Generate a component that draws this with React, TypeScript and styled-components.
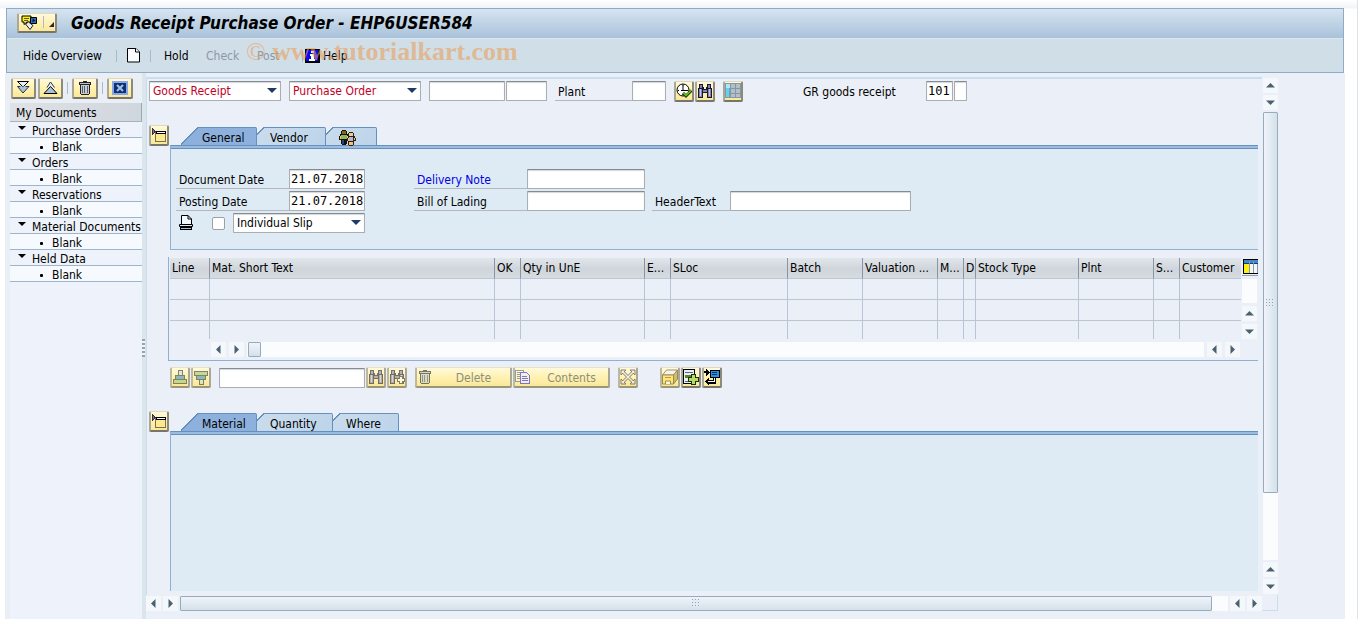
import React from 'react';
import styled, { createGlobalStyle, css } from 'styled-components';

const SANS = `'DejaVu Sans Condensed', 'DejaVu Sans', Tahoma, sans-serif`;
const MONO = `'DejaVu Sans Mono', 'Liberation Mono', monospace`;
const EDGE = '#6690bd';

const GlobalStyle = createGlobalStyle`
  * { box-sizing: border-box; }
  body { margin: 0; background: #fff; color: #000; font: 12px/16px ${SANS}; font-stretch: condensed; }
  button, input, select { font: inherit; color: inherit; margin: 0; }
  button { cursor: pointer; }
  svg { display: block; flex: none; }
`;

/* ---------- frame ---------- */

const Page = styled.div`
  position: relative;
  display: flex;
  flex-direction: column;
  min-height: 100vh;
  padding: 0 12px 0 5px;
  border-right: 1px solid #dbe2ea;
  background: linear-gradient(#fff, #f1f4f8 8px, #fff 9px);
`;

const Header = styled.header`
  margin: 8px 1px 0;
  border: 1px solid #8fabc6;
  background: #d0dee8;
`;

const TitleBar = styled.div`
  display: flex;
  align-items: center;
  gap: 14px;
  height: 30px;
  padding: 0 10px 2px;
  border-bottom: 1px solid #dce8f1;
  background: linear-gradient(#d6e4f0, #bfd3e5 50%, #a9c2da);
`;

const Title = styled.h1`
  margin: 0;
  font: italic bold 17px/20px ${SANS};
  white-space: nowrap;
`;

const Toolbar = styled.div`
  display: flex;
  align-items: center;
  height: 33px;
  padding: 0 8px;
`;

const ToolLink = styled.button<{ $width: number; $tight?: boolean; $center?: boolean }>`
  display: flex;
  align-items: center;
  justify-content: ${(p) => (p.$center ? 'center' : 'flex-start')};
  gap: 3px;
  width: ${(p) => p.$width}px;
  height: 24px;
  padding: 0 ${(p) => (p.$tight ? 2 : 8)}px;
  border: 0;
  background: none;
  white-space: nowrap;
  &:disabled { color: #8c98a4; cursor: default; }
`;

const Divider = styled.span<{ $gap: number }>`
  flex: none;
  width: 1px;
  height: 12px;
  margin: 0 ${(p) => p.$gap}px;
  background: #a7bace;
`;

const Watermark = styled.div`
  position: absolute;
  left: 246px;
  top: 38px;
  color: rgba(232, 160, 92, 0.62);
  font: bold 26px/28px 'Liberation Serif', serif;
  white-space: nowrap;
  pointer-events: none;
  span { font-weight: normal; }
`;

const Body = styled.div`
  flex: 1;
  display: flex;
  background: #ebeff7;
`;

/* ---------- shared controls ---------- */

const IconButton = styled.button<{ $width?: number; $height?: number }>`
  position: relative;
  flex: none;
  display: flex;
  align-items: center;
  justify-content: center;
  width: ${(p) => p.$width ?? 20}px;
  height: ${(p) => p.$height ?? 21}px;
  padding: 0;
  border: 1px solid #9a978a;
  border-width: 1px 2px 2px;
  border-color: #ded9bb #8d8a7c #77746a #aaa794;
  border-radius: 2px;
  background: linear-gradient(#fff9dc, #fff1ae 55%, #f9e79b);
  &:disabled { border-color: #e6e2c8 #aaa794 #9b9675 #bcb99f; color: #8e8e80; cursor: default; }
  &:disabled svg { opacity: 0.6; }
`;

const WideButton = styled(IconButton)`
  width: 97px;
  justify-content: flex-start;
  padding-left: 0;
  span { flex: 1; padding: 1px 0 0 4px; text-align: center; }
`;

const fieldLook = css`
  height: 20px;
  border: 1px solid #a9aeb4;
  border-top-color: #858b92;
  border-radius: 1px;
  background: #fff;
  box-shadow: inset 0 1px 1px #d4d7da;
`;

const Field = styled.input<{ $width: number }>`
  ${fieldLook}
  flex: none;
  width: ${(p) => p.$width}px;
  padding: 0 0 0 1px;
  font-family: ${MONO};
`;

const SelectBox = styled.span`
  position: relative;
  flex: none;
  display: block;
  width: 132px;
  &::after {
    content: '';
    position: absolute;
    right: 4px;
    top: 7px;
    border: 5px solid transparent;
    border-top-color: #1f3a66;
    border-bottom: 0;
    pointer-events: none;
  }
`;

const Select = styled.select<{ $red?: boolean }>`
  ${fieldLook}
  display: block;
  width: 100%;
  padding: 0 3px;
  appearance: none;
  color: ${(p) => (p.$red ? '#c1001f' : '#000')};
`;

const Label = styled.label<{ $width: number; $plain?: boolean; $link?: boolean }>`
  flex: none;
  width: ${(p) => p.$width}px;
  height: 20px;
  padding: 3px 0 0 3px;
  border-bottom: 1px solid ${(p) => (p.$plain ? 'transparent' : '#b4b8bd')};
  color: ${(p) => (p.$link ? '#0000e6' : 'inherit')};
  white-space: nowrap;
`;

const Group = styled.div<{ $gap?: number }>`
  display: flex;
  align-items: center;
  gap: ${(p) => p.$gap ?? 1}px;
`;

function Choice({ label, options, red }: { label: string; options: string[]; red?: boolean }) {
  return (
    <SelectBox>
      <Select aria-label={label} $red={red} defaultValue={options[0]}>
        {options.map((o) => <option key={o}>{o}</option>)}
      </Select>
    </SelectBox>
  );
}

/* ---------- sidebar ---------- */

const Sidebar = styled.aside`
  flex: none;
  width: 137px;
  padding-left: 5px;
  background: #e9eff4;
`;

const SideTools = styled.div`
  display: flex;
  align-items: center;
  height: 30px;
  padding: 0 0 0 1px;
  gap: 2px;
`;

const SidePanel = styled.nav`
  min-height: calc(100% - 30px);
  background: #eef3fb;
`;

const SideTitle = styled.h2`
  height: 19px;
  margin: 0;
  padding: 2px 6px 0;
  border-right: 1px solid #9aa8b5;
  border-bottom: 1px solid #a9b2bb;
  background: linear-gradient(90deg, #dfe2e6, #cfd6dd);
  font: 12px/16px ${SANS};
`;

const Tree = styled.ul`
  margin: 0;
  padding: 0;
  list-style: none;
`;

const TreeButton = styled.button<{ $leaf?: boolean }>`
  display: flex;
  align-items: center;
  gap: 7px;
  width: 100%;
  height: 16px;
  padding: 3px 0 0 ${(p) => (p.$leaf ? 30 : 8)}px;
  border: 0;
  border-bottom: 1px solid #9db5cb;
  background: ${(p) => (p.$leaf ? '#f6faff' : 'none')};
  line-height: 14px;
  white-space: nowrap;
  &::before {
    content: '';
    ${(p) => p.$leaf
      ? css`width: 3px; height: 3px; margin-right: 2px; border-radius: 1px; background: #000;`
      : css`margin-bottom: 6px; border: 4px solid transparent; border-top-color: #000; border-bottom: 0; margin-right: -1px;`}
  }
`;

const Splitter = styled.div`
  flex: none;
  display: flex;
  align-items: center;
  width: 4px;
  padding-top: 4px;
  background: #dae5ec;
`;

const SplitGrip = styled.span`
  width: 3px;
  height: 18px;
  background: repeating-linear-gradient(#97a4b0 0 2px, #eef4f8 2px 4px);
`;

/* ---------- workspace ---------- */

const Workspace = styled.main`
  flex: 1;
  min-width: 0;
  display: grid;
  grid-template-columns: minmax(0, 1fr) 16px;
  grid-template-rows: 1fr 16px;
  margin: 4px 67px 8px 0;
`;

const Content = styled.div`
  display: flex;
  flex-direction: column;
  border-left: 1px solid #c9dcea;
  border-top: 2px solid #cbdeee;
  padding: 2px 4px 4px 2px;
`;

const KeyRow = styled.div`
  display: flex;
  gap: 8px;
  height: 20px;
  margin-bottom: 24px;
`;

const Section = styled.section<{ $grow?: boolean }>`
  display: grid;
  grid-template-columns: 21px minmax(0, 1fr);
  grid-template-rows: 20px 1fr;
  ${(p) => p.$grow && css`flex: 1;`}
`;

const TabStrip = styled.div`
  display: flex;
  align-items: flex-end;
  padding-left: 11px;
`;

const Tab = styled.button<{ $active?: boolean; $width: number; $z: number }>`
  position: relative;
  z-index: ${(p) => p.$z};
  display: flex;
  align-items: center;
  width: ${(p) => p.$width}px;
  height: 18px;
  margin-right: -10px;
  padding: ${(p) => (p.$active ? '4px 0 0 21px' : '4px 0 0 23px')};
  border: 0;
  border-right: 1px solid ${EDGE};
  border-radius: 0 2px 0 0;
  background:
    linear-gradient(${EDGE}, ${EDGE}) 18px 0 / 100% 1px no-repeat,
    linear-gradient(135deg, transparent 12px, ${EDGE} 12px, ${EDGE} 13px, ${(p) => (p.$active ? '#8db1dc 13px' : '#c9dced 13px, #bdd3e9')});
`;

const Panel = styled.div<{ $short?: boolean }>`
  grid-column: 2;
  position: relative;
  border-top: 1px solid ${EDGE};
  border-left: 1px solid #8fb0d2;
  border-bottom: ${(p) => (p.$short ? '1px solid #8fb0cf' : '0')};
  background: linear-gradient(#9bbbe0 2px, ${EDGE} 2px, ${EDGE} 3px, #deebf5 3px);
  min-height: ${(p) => (p.$short ? 105 : 120)}px;
  padding: 23px 0 14px 5px;
`;

const FormRow = styled.div`
  display: flex;
  align-items: center;
  height: 20px;
  margin-bottom: 2px;
`;

const Spacer = styled.span<{ $width: number }>`
  flex: none;
  width: ${(p) => p.$width}px;
`;

const Check = styled.input`
  flex: none;
  appearance: none;
  width: 13px;
  height: 13px;
  margin: 0 8px 0 18px;
  border: 1px solid #9ba1a8;
  border-radius: 2px;
  background: #fff;
`;

/* ---------- item grid ---------- */

const GridFrame = styled.div`
  margin: 7px 0 6px 19px;
  border-left: 1px solid #8fb0cf;
  border-bottom: 1px solid #8fb0cf;
`;

const GridTop = styled.div`
  display: flex;
  padding: 1px 0 0 1px;
`;

const Items = styled.table`
  flex: 1;
  width: 0;
  height: 81px;
  table-layout: fixed;
  border-collapse: separate;
  border-spacing: 0;
  th, td { padding: 0 2px; border-left: 1px solid #b9c5d4; border-bottom: 1px solid #bcc7d5; }
  th:first-child, td:first-child { border-left: 0; }
  th {
    height: 21px;
    border-left-color: #8795a5;
    background: linear-gradient(#e2e6ea, #cfd5db 55%, #d7dce1);
    font-weight: normal;
    text-align: left;
    white-space: nowrap;
    overflow: hidden;
    text-overflow: ellipsis;
  }
  td { height: 21px; }
  tr:last-child td { height: 18px; border-bottom: 0; }
`;

const GridSide = styled.div`
  flex: none;
  display: flex;
  flex-direction: column;
  gap: 3px;
  width: 17px;
  padding-left: 1px;
`;

const ConfigButton = styled.button`
  height: 18px;
  padding: 0 0 1px 1px;
  border: 0;
  border-bottom: 1px solid #8ea3ba;
  background: none;
  overflow: hidden;
`;

const GridScroll = styled.div`
  display: flex;
  align-items: center;
  gap: 3px;
  padding: 3px 18px 3px 42px;
`;

const Track = styled.span<{ $vertical?: boolean }>`
  flex: 1;
  display: flex;
  flex-direction: ${(p) => (p.$vertical ? 'column' : 'row')};
  ${(p) => (p.$vertical ? 'width: 15px;' : 'height: 15px;')}
  background: #fafcfe;
`;

const Thumb = styled.span<{ $vertical?: boolean; $grow: number }>`
  display: flex;
  align-items: center;
  justify-content: center;
  ${(p) => (p.$grow ? `flex: ${p.$grow} 0 0;` : 'flex: 0 0 13px; margin-left: 1px;')}
  border: 1px solid #98abba;
  border-radius: 1px;
  background: linear-gradient(${(p) => (p.$vertical ? '90deg' : '180deg')}, #f0f4f9, #e4ebf4 45%, #d3e1eb);
`;

const Rest = styled.span<{ $grow: number }>`
  flex: ${(p) => p.$grow} 0 0;
`;

const Grip = styled.span`
  width: 8px;
  height: 8px;
  background:
    repeating-linear-gradient(90deg, transparent 0 1px, #e2eaf2 1px 3px),
    repeating-linear-gradient(#93a4b3 0 1px, transparent 1px 3px);
`;

type Dir = 'up' | 'down' | 'left' | 'right';

const ArrowButton = styled.button`
  flex: none;
  display: flex;
  align-items: center;
  justify-content: center;
  width: 15px;
  height: 15px;
  padding: 0;
  border: 0;
  background: #f4f8fb;
`;

const arrowPath: Record<Dir, string> = {
  up: 'M4.5 2 9 6.5H0z',
  down: 'M4.5 7 9 2.5H0z',
  left: 'M2 4.5 6.5 0v9z',
  right: 'M7 4.5 2.5 0v9z',
};

function Arrow({ dir }: { dir: Dir }) {
  return (
    <ArrowButton aria-label={`Scroll ${dir}`}>
      <svg width="9" height="9"><path d={arrowPath[dir]} fill="#4b6172" /></svg>
    </ArrowButton>
  );
}

const VScroll = styled.div`
  display: flex;
  flex-direction: column;
  align-items: center;
  gap: 2px;
  padding: 1px 0 1px 0;
`;

const HScroll = styled.div`
  display: flex;
  align-items: center;
  gap: 2px;
`;

const Corner = styled.div`
  border: 1px solid #cbdeec;
  border-width: 0 1px 1px 0;
`;

const Actions = styled.div`
  display: flex;
  align-items: center;
  height: 21px;
  margin: 0 0 23px 21px;
`;

/* ---------- icons ---------- */

function Icon({ children, size = 16 }: { children: React.ReactNode; size?: number }) {
  return <svg width={size} height={size} viewBox="0 0 16 16" shapeRendering="crispEdges" aria-hidden>{children}</svg>;
}

const ServiceIcon = () => (
  <svg width="17" height="15" viewBox="0 0 17 15" aria-hidden>
    <path d="M1 1h9v6H6L3 9.500V7H1z" fill="#ffef1a" stroke="#000" />
    <path d="M3 3.500h5M3 5.500h4" stroke="#555" />
    <path d="M9.500 2.500h6v6h-6z" fill="#2f6fba" stroke="#000" />
    <path d="M11.500 3.500v4l3-2z" fill="#001a44" />
    <path d="m4.500 9 3-2 4.500 3.500-3 4z" fill="#e6edf4" stroke="#222" />
  </svg>
);
const MenuCorner = () => <svg width="5" height="9" aria-hidden><path d="M5 4v5H0z" fill="#2b2340" /></svg>;
const PageIcon = () => (
  <svg width="13" height="15" viewBox="0 0 13 15" aria-hidden>
    <path d="M.5.5h8.500l3.500 3.500v10H.5z" fill="#f8fcff" stroke="#000" />
    <path d="M8.500.5V4h4" fill="#fff" stroke="#000" />
  </svg>
);
const InfoIcon = () => (
  <svg width="15" height="14" viewBox="0 0 15 14" shapeRendering="crispEdges" aria-hidden>
    <path d="M0 0h15v14H0z" fill="#000" /><path d="M1 1h12v11H1z" fill="#0b0bea" />
    <path d="M6 2h3v2H6zM5 5h4v5h1v2H4v-2h2V7H5z" fill="#fff" />
  </svg>
);
const ExpandAll = () => (
  <svg width="15" height="13" viewBox="0 0 15 13" aria-hidden>
    <path d="M1.500.5h11L7 6z" fill="#e6edf4" stroke="#000" />
    <path d="M4.500 5.500H1.500L7 12l6-6.500H9.500" fill="#a9c2da" stroke="#23364a" />
  </svg>
);
const CollapseAll = () => (
  <svg width="15" height="13" viewBox="0 0 15 13" aria-hidden>
    <path d="M4 6.500 7.500 1l4 5.500" fill="#e6edf4" stroke="#23364a" />
    <path d="M1 12.500h13L7.500 5.500z" fill="#a9c2da" stroke="#000" />
  </svg>
);
const TrashIcon = () => (
  <Icon>
    <path d="M2 2h4V1h4v1h4v3H2z" fill="#222" /><path d="M3 3h10v1H3z" fill="#b9c4ce" />
    <path d="M3 5h10v8l-1 2H4l-1-2z" fill="#222" /><path d="M4 5h8v9H4z" fill="#c5cdd5" />
    <path d="M5 6h1v7H5zM7 6h1v7H7zM10 6h1v7h-1z" fill="#54606c" />
  </Icon>
);
const CloseIcon = () => (
  <Icon>
    <path d="M0 1h16v14H0z" fill="#84a8ea" /><path d="M2 3h12v10H2z" fill="#12306c" />
    <path d="m5 5 6 6M11 5l-6 6" stroke="#9fc4f2" strokeWidth="2" shapeRendering="auto" />
  </Icon>
);
const DetailIcon = () => (
  <Icon>
    <path d="M4 5h11v10H4z" fill="#77704e" /><path d="M5 6h9v8H5z" fill="#ffe98f" />
    <path d="M5 4h10v3H5z" fill="#000" /><path d="M6 5h8v1H6z" fill="#fff" />
    <path d="M1 1h1v1h1v1h1v1h1v1H4v1H3v1H2v1H1z" fill="#3b2c40" /><path d="M2 3h1v3H2z" fill="#8a6d92" />
  </Icon>
);
const ClockCheck = () => (
  <svg width="16" height="16" viewBox="0 0 16 16" aria-hidden>
    <circle cx="7" cy="7" r="6" fill="#fff" stroke="#000" />
    <path d="M7 2v6M5 7.500h7M7 1.500v1M2 7.500h1M7 11v1.500" stroke="#000" />
    <path d="m7 10 3 3 5.500-5.500" fill="none" stroke="#173f00" strokeWidth="3" />
    <path d="m7.500 10 2.500 2.500 5-5" fill="none" stroke="#6ac21c" strokeWidth="1.500" />
  </svg>
);
const Binoculars = ({ more }: { more?: boolean }) => (
  <Icon>
    <path d="M2 1h4v3h1v2h2V4h1V1h4v4h1v10h-5v-5H6v5H1V5h1z" fill="#171923" />
    <path d="M3 2h2v3H3zM11 2h2v3h-2zM2 6h3v8H2zM11 6h3v8h-3zM6 7h4v2H6z" fill="#8583bf" />
    <path d="M3 6h1v7H3zM12 6h1v7h-1z" fill="#c4c4e4" />
    {more && (
      <>
        <path d="M10 7h4v2h2v4h-2v2h-4v-2H8V9h2z" fill="#333" />
        <path d="M11 8h2v2h2v2h-2v2h-2v-2H9v-2h2z" fill="#fff" />
      </>
    )}
  </Icon>
);
const LayoutIcon = () => (
  <Icon>
    <path d="M0 0h16v15H0z" fill="#8497a3" /><path d="M1 1h4v4H1z" fill="#a8e8fb" /><path d="M1 5h3v9H1z" fill="#62d2f2" />
    <path d="M6 1h4v4H6zM11 1h4v4h-4zM6 6h4v4H6zM11 6h4v4h-4zM6 11h4v3H6zM11 11h4v3h-4z" fill="#b3bfc7" />
  </Icon>
);
const PeopleIcon = () => (
  <svg width="17" height="16" viewBox="0 0 17 16" shapeRendering="crispEdges" aria-hidden>
    <path d="M3 0h4v1h1v3h1v2h1v4H8v4H7v1H3v-1H2v-4H0V6h1V4h1V1h1z" fill="#17120c" />
    <path d="M3 1h4v3H3z" fill="#8a6427" /><path d="M2 5h6v4H2z" fill="#8cba5a" /><path d="M1 6h1v3H1zM8 6h1v3H8z" fill="#e9c977" />
    <path d="M3 10h2v4H3z" fill="#2b427e" />
    <path d="M10 2h4v1h1v3h1v2h1v3h-2v4h-1v1h-4v-1H9v-4H8V8h1V3h1z" fill="#2c2113" />
    <path d="M10 3h4v3h-4z" fill="#e8cf9b" /><path d="M10 7h4v4h-4z" fill="#b5b4d6" /><path d="M9 8h1v3H9zM15 8h1v2h-1zM10 12h4v3h-4z" fill="#f0c476" />
  </svg>
);
const PrinterIcon = () => (
  <svg width="15" height="16" viewBox="0 0 15 16" aria-hidden>
    <path d="M2.500 9.500v-9H9l3.500 3.500v5.500z" fill="#f3fbff" stroke="#000" /><path d="M9 .5V4h3.500" fill="none" stroke="#000" />
    <path d="M.5 9.500h13v2H.5z" fill="#dceaf2" stroke="#000" /><path d="M1 12h12v3H1z" fill="#000" /><path d="M2 13.500h10" stroke="#a8c0cc" />
  </svg>
);
const SortIcon = ({ down }: { down?: boolean }) => (
  <svg width="16" height="15" viewBox="0 0 16 15" shapeRendering="crispEdges" aria-hidden>
    <g transform={down ? 'matrix(1 0 0 -1 0 15)' : undefined}>
      <path d="M6 0h5v5h2v4h2v5H1V9h2V5h3z" fill="#2c3a2c" />
      <path d="M7 1h3v4H7z" fill="#d5dbe0" /><path d="M4 6h8v3H4z" fill="#3f95c3" /><path d="M2 10h12v3H2z" fill="#a5c777" />
    </g>
  </svg>
);
const CopyIcon = () => (
  <Icon>
    <path d="M.5 1.500h8v11h-8z" fill="#fffbe0" stroke="#567" /><path d="M2 3.500h5M2 5.500h5M2 7.500h5M2 9.500h5" stroke="#567" />
    <path d="M5.500 3.500h6l3 3v8h-9z" fill="#eef" stroke="#2424e0" /><path d="M7 7.500h5M7 9.500h6M7 11.500h6" stroke="#2424e0" />
  </Icon>
);
const SpreadIcon = () => (
  <svg width="16" height="16" viewBox="0 0 16 16" aria-hidden>
    <path d="M3 3l10 10M13 3 3 13" stroke="#333" strokeWidth="3" />
    <path d="M1 1h5L1 6zM15 1v5l-5-5zM1 15v-5l5 5zM15 15h-5l5-5z" fill="#eeeef8" stroke="#333" />
    <path d="M3 3l10 10M13 3 3 13" stroke="#eeeef8" strokeWidth="1.500" />
  </svg>
);
const BoxIcon = () => (
  <svg width="16" height="16" viewBox="0 0 16 16" aria-hidden>
    <path d="m.5 6 4-5h11l-4 5z" fill="#f4f4f4" stroke="#555" /><path d="m11.500 6 4-5v9l-4 5z" fill="#b89a2c" stroke="#544a26" />
    <path d="M.5 6h11v9h-11z" fill="#ffe44a" stroke="#544a26" /><path d="M3 8.500h6" stroke="#a44" /><path d="M3.500 15v-3h5v3" fill="#fff" stroke="#544a26" />
  </svg>
);
const InsertIcon = () => (
  <Icon>
    <path d="M0 0h12v15H0z" fill="#000" /><path d="M1 1h10v13H1z" fill="#e8f2fa" />
    <path d="M2 3.500h8M2 12.500h6" stroke="#4b6b9c" /><path d="M2 6h7v3H2z" fill="#67801d" />
    <path d="M8 5h5v3h3v5h-3v3H8v-3H5V8h3z" fill="#1f3000" />
    <path d="M9 6h3v3h3v3h-3v3H9v-3H6V9h3z" fill="#b4dc68" />
  </Icon>
);
const TransferIcon = () => (
  <Icon>
    <path d="M6 1h10v8H6z" fill="#000" /><path d="M7 2h8v6H7z" fill="#2891e6" /><path d="M8 3.500h5M8 5.500h5" stroke="#073867" />
    <path d="M0 2h2V0h1v1h1v1h1v1h1v1H5v1H4v1H3v1H2V4H0z" fill="#000" />
    <path d="M9 9h3v6H5v1H4v-1H3v-1H2v-1H1v-1h1v-1h1v-1h1V9h1v2h4z" fill="#000" />
    <path d="M10 9h1v4H4v-1h6z" fill="#fff" />
  </Icon>
);
const ColumnsIcon = () => (
  <svg width="15" height="15" viewBox="0 0 15 15" shapeRendering="crispEdges" aria-hidden>
    <path d="M0 0h15v15H0z" fill="#000" /><path d="M1 1h14v4H1z" fill="#3c86d2" /><path d="M1 4h14v1H1z" fill="#153d6a" />
    <path d="M1 5h5v9H1z" fill="#ffee12" /><path d="M7 5h3v9H7zM11 5h4v9h-4z" fill="#f4f5f7" /><path d="M6 2h1v12H6zM10 2h1v12h-1zM14 5h1v9h-1z" fill="#8497aa" />
  </svg>
);

/* ---------- data ---------- */

const folders = ['Purchase Orders', 'Orders', 'Reservations', 'Material Documents', 'Held Data'];

const columns: { name: string; width?: number }[] = [
  { name: 'Line', width: 39 }, { name: 'Mat. Short Text' }, { name: 'OK', width: 26 },
  { name: 'Qty in UnE', width: 124 }, { name: 'E...', width: 26 }, { name: 'SLoc', width: 117 },
  { name: 'Batch', width: 75 }, { name: 'Valuation ...', width: 75 }, { name: 'M...', width: 26 },
  { name: 'D', width: 12 }, { name: 'Stock Type', width: 103 }, { name: 'Plnt', width: 75 },
  { name: 'S...', width: 26 }, { name: 'Customer', width: 62 },
];

function Tabs({ items }: { items: { name: string; width: number; icon?: React.ReactNode }[] }) {
  return (
    <TabStrip role="tablist">
      {items.map((t, i) => (
        <Tab key={t.name} role="tab" aria-selected={i === 0} aria-label={t.name} $active={i === 0} $width={t.width} $z={items.length - i}>
          {t.icon ?? t.name}
        </Tab>
      ))}
    </TabStrip>
  );
}

export default function App() {
  return (
    <Page>
      <GlobalStyle />
      <Header>
        <TitleBar>
          <IconButton $width={40} $height={20} aria-label="Services">
            <Group $gap={4}><ServiceIcon /><Divider $gap={1} /><MenuCorner /></Group>
          </IconButton>
          <Title>Goods Receipt Purchase Order - EHP6USER584</Title>
        </TitleBar>
        <Toolbar>
          <ToolLink $width={101}>Hide Overview</ToolLink>
          <Divider $gap={0} />
          <ToolLink $width={33} $center aria-label="New"><PageIcon /></ToolLink>
          <Divider $gap={0} />
          <Spacer $width={5} />
          <ToolLink $width={42}>Hold</ToolLink>
          <ToolLink $width={51} disabled>Check</ToolLink>
          <ToolLink $width={53} disabled>Post</ToolLink>
          <Divider $gap={0} />
          <ToolLink $width={50} $tight><InfoIcon />Help</ToolLink>
        </Toolbar>
      </Header>

      <Body>
        <Sidebar>
          <SideTools>
            <IconButton $width={25} aria-label="Expand all"><ExpandAll /></IconButton>
            <IconButton $width={25} aria-label="Collapse all"><CollapseAll /></IconButton>
            <Divider $gap={2} />
            <IconButton $width={26} aria-label="Delete document"><TrashIcon /></IconButton>
            <Divider $gap={2} />
            <IconButton $width={26} aria-label="Close overview"><CloseIcon /></IconButton>
          </SideTools>
          <SidePanel>
            <SideTitle>My Documents</SideTitle>
            <Tree>
              {folders.map((f) => (
                <li key={f}>
                  <TreeButton>{f}</TreeButton>
                  <Tree><li><TreeButton $leaf>Blank</TreeButton></li></Tree>
                </li>
              ))}
            </Tree>
          </SidePanel>
        </Sidebar>
        <Splitter><SplitGrip /></Splitter>

        <Workspace>
          <Content>
            <KeyRow>
              <Choice label="Transaction" options={['Goods Receipt']} red />
              <Choice label="Reference" options={['Purchase Order']} red />
              <Group>
                <Field $width={76} aria-label="Purchase order number" />
                <Field $width={41} aria-label="Item" />
              </Group>
              <Group $gap={0}>
                <Label $width={77} htmlFor="plant">Plant</Label>
                <Field $width={34} id="plant" />
              </Group>
              <Group>
                <IconButton aria-label="Execute"><ClockCheck /></IconButton>
                <IconButton aria-label="Find"><Binoculars /></IconButton>
              </Group>
              <Group><IconButton aria-label="Layout"><LayoutIcon /></IconButton></Group>
              <Spacer $width={41} />
              <Group>
                <Label $width={125} $plain htmlFor="movement">GR goods receipt</Label>
                <Field $width={27} id="movement" defaultValue="101" />
                <Field $width={13} aria-label="Special stock" />
              </Group>
            </KeyRow>

            <Section>
              <IconButton aria-label="Close header data"><DetailIcon /></IconButton>
              <Tabs items={[{ name: 'General', width: 76 }, { name: 'Vendor', width: 79 }, { name: 'Partner', width: 61, icon: <PeopleIcon /> }]} />
              <Panel $short>
                <FormRow>
                  <Label $width={113} htmlFor="docdate">Document Date</Label>
                  <Field $width={76} id="docdate" defaultValue="21.07.2018" />
                  <Spacer $width={49} />
                  <Label $width={113} $link htmlFor="delivery">Delivery Note</Label>
                  <Field $width={118} id="delivery" />
                </FormRow>
                <FormRow>
                  <Label $width={113} htmlFor="postdate">Posting Date</Label>
                  <Field $width={76} id="postdate" defaultValue="21.07.2018" />
                  <Spacer $width={49} />
                  <Label $width={113} htmlFor="lading">Bill of Lading</Label>
                  <Field $width={118} id="lading" />
                  <Spacer $width={7} />
                  <Label $width={78} htmlFor="headertext">HeaderText</Label>
                  <Field $width={181} id="headertext" />
                </FormRow>
                <FormRow>
                  <Spacer $width={3} />
                  <PrinterIcon />
                  <Check type="checkbox" aria-label="Print slip" />
                  <Choice label="Slip type" options={['Individual Slip']} />
                </FormRow>
              </Panel>
            </Section>

            <GridFrame>
              <GridTop>
                <Items>
                  <colgroup>
                    {columns.map((c) => <col key={c.name} width={c.width} />)}
                  </colgroup>
                  <thead><tr>{columns.map((c) => <th key={c.name} scope="col">{c.name}</th>)}</tr></thead>
                  <tbody>
                    {[0, 1, 2].map((r) => <tr key={r}>{columns.map((c) => <td key={c.name} />)}</tr>)}
                  </tbody>
                </Items>
                <GridSide>
                  <ConfigButton aria-label="Configure columns"><ColumnsIcon /></ConfigButton>
                  <Track $vertical />
                  <Arrow dir="up" />
                  <Arrow dir="down" />
                </GridSide>
              </GridTop>
              <GridScroll>
                <Arrow dir="left" />
                <Arrow dir="right" />
                <Track><Thumb $grow={0} /></Track>
                <Arrow dir="left" />
                <Arrow dir="right" />
              </GridScroll>
            </GridFrame>

            <Actions>
              <Group>
                <IconButton disabled aria-label="Sort ascending"><SortIcon /></IconButton>
                <IconButton disabled aria-label="Sort descending"><SortIcon down /></IconButton>
              </Group>
              <Spacer $width={8} />
              <Group>
                <Field $width={146} aria-label="Search items" />
                <IconButton disabled aria-label="Find item"><Binoculars /></IconButton>
                <IconButton disabled aria-label="Find next item"><Binoculars more /></IconButton>
              </Group>
              <Spacer $width={8} />
              <Group>
                <WideButton disabled><TrashIcon /><span>Delete</span></WideButton>
                <WideButton disabled><CopyIcon /><span>Contents</span></WideButton>
              </Group>
              <Spacer $width={8} />
              <IconButton disabled aria-label="Distribute"><SpreadIcon /></IconButton>
              <Spacer $width={22} />
              <Group>
                <IconButton disabled aria-label="Stock overview"><BoxIcon /></IconButton>
                <IconButton aria-label="Insert line"><InsertIcon /></IconButton>
                <IconButton aria-label="Transfer"><TransferIcon /></IconButton>
              </Group>
            </Actions>

            <Section $grow>
              <IconButton aria-label="Close item details"><DetailIcon /></IconButton>
              <Tabs items={[{ name: 'Material', width: 76 }, { name: 'Quantity', width: 86 }, { name: 'Where', width: 76 }]} />
              <Panel />
            </Section>
          </Content>

          <VScroll>
            <Arrow dir="up" />
            <Arrow dir="down" />
            <Track $vertical>
              <Thumb $vertical $grow={85}><Grip /></Thumb>
              <Rest $grow={15} />
            </Track>
            <Arrow dir="up" />
            <Arrow dir="down" />
          </VScroll>
          <HScroll>
            <Arrow dir="left" />
            <Arrow dir="right" />
            <Track>
              <Thumb $grow={985}><Grip /></Thumb>
              <Rest $grow={15} />
            </Track>
            <Arrow dir="left" />
            <Arrow dir="right" />
          </HScroll>
          <Corner />
        </Workspace>
      </Body>
      <Watermark><span>©</span> www.tutorialkart.com</Watermark>
    </Page>
  );
}
